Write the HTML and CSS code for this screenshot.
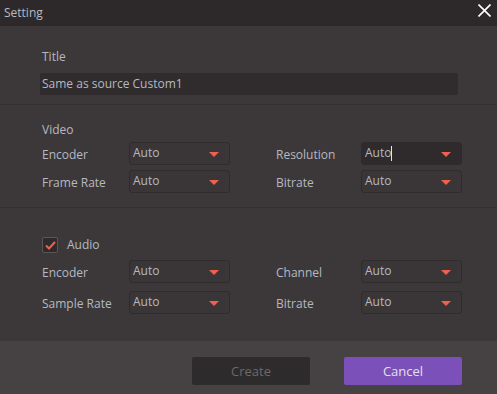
FILE: index.html
```html
<!DOCTYPE html>
<html>
  <head>
    <meta charset="utf-8"/>
    <link rel="stylesheet" href="styles.css">
  </head>
  <body>
    <div class="dialog">

      <div class="titlebar">
        <span class="titlebar-text">Setting</span>
        <svg class="close" width="13" height="13" viewBox="0 0 13 13">
          <path d="M0.5 0.5 L12.5 12.5 M12.5 0.5 L0.5 12.5" stroke="#ffffff" stroke-width="1.6" fill="none"/>
        </svg>
      </div>

      <div class="section section-title">
        <div class="heading">Title</div>
        <div class="text-input">Same as source Custom1</div>
      </div>

      <div class="section section-video">
        <div class="heading">Video</div>
        <div class="grid grid-video">
          <span class="label">Encoder</span>
          <div class="select"><span>Auto</span><i class="arrow"></i></div>
          <span></span>
          <span class="label">Resolution</span>
          <div class="select focused"><span>Auto</span><b class="caret"></b><i class="arrow"></i></div>

          <span class="label">Frame Rate</span>
          <div class="select"><span>Auto</span><i class="arrow"></i></div>
          <span></span>
          <span class="label">Bitrate</span>
          <div class="select"><span>Auto</span><i class="arrow"></i></div>
        </div>
      </div>

      <div class="section section-audio">
        <div class="check-row">
          <span class="checkbox">
            <svg width="11" height="9" viewBox="0 0 11 9">
              <path d="M1 4.5 L4 7.5 L10 1" stroke="#f0604f" stroke-width="2" fill="none"/>
            </svg>
          </span>
          <span class="check-label">Audio</span>
        </div>
        <div class="grid grid-audio">
          <span class="label">Encoder</span>
          <div class="select"><span>Auto</span><i class="arrow"></i></div>
          <span></span>
          <span class="label">Channel</span>
          <div class="select"><span>Auto</span><i class="arrow"></i></div>

          <span class="label">Sample Rate</span>
          <div class="select"><span>Auto</span><i class="arrow"></i></div>
          <span></span>
          <span class="label">Bitrate</span>
          <div class="select"><span>Auto</span><i class="arrow"></i></div>
        </div>
      </div>

      <div class="footer">
        <button class="btn btn-create">Create</button>
        <button class="btn btn-cancel">Cancel</button>
      </div>

    </div>
  </body>
</html>
```

FILE: styles.css
```css
html, body {
  margin: 0px;
  padding: 0px;
  background-color: #3c3839;
}

body {
  width: 497px;
  height: 394px;
  overflow: hidden;
  font-family: "Open Sans", "Noto Sans", sans-serif;
  font-size: 12px;
  color: #b6b8c1;
}

.dialog {
  display: flex;
  flex-direction: column;
  height: 394px;
}

.titlebar {
  height: 26px;
  background-color: #2d292a;
  display: flex;
  align-items: center;
  justify-content: space-between;
  padding: 0px 6px 0px 4px;
  flex-shrink: 0;
}

.titlebar-text {
  color: #b8bac3;
  margin-top: -2px;
}

.close {
  margin-top: -6px;
}

.section {
  padding-left: 40px;
  border-bottom: 1px solid #353132;
}

.heading {
  padding-left: 2px;
  line-height: 16px;
}

.section-title {
  padding-top: 23px;
  height: 55px;
}

.section-title .heading {
  margin-bottom: 8px;
}

.text-input {
  width: 416px;
  height: 22px;
  line-height: 22px;
  padding-left: 2px;
  background-color: #302c2d;
  border-radius: 2px;
}

.section-video {
  padding-top: 17px;
  height: 85px;
}

.section-video .heading {
  margin-bottom: 4px;
}

.grid {
  display: grid;
  grid-template-columns: 87px 101px 46px 85px 101px;
  align-items: center;
  padding-left: 2px;
}

.grid-video {
  row-gap: 5px;
}

.grid-audio {
  row-gap: 8px;
}

.label {
  line-height: 16px;
  padding-top: 2px;
}

.select {
  height: 21px;
  border: 1px solid #302c2d;
  border-radius: 3px;
  background-color: #3a3637;
  display: flex;
  align-items: center;
  padding-left: 3px;
  position: relative;
}

.select span {
  margin-top: -2px;
}

.select.focused {
  background-color: #2f2b2c;
  border-color: #2f2b2c;
}

.caret {
  width: 1px;
  height: 15px;
  background-color: #e6e6e6;
  margin-top: -1px;
}

.arrow {
  position: absolute;
  right: 10px;
  top: 9px;
  width: 0px;
  height: 0px;
  border-left: 5px solid transparent;
  border-right: 5px solid transparent;
  border-top: 5px solid #f0604f;
}

.section-audio {
  padding-top: 29px;
  flex: 1;
  border-bottom: none;
}

.check-row {
  display: flex;
  align-items: center;
  padding-left: 2px;
  margin-bottom: 7px;
}

.checkbox {
  width: 14px;
  height: 14px;
  border: 1px solid #5a5657;
  border-radius: 2px;
  background-color: #2f2b2c;
  display: flex;
  align-items: center;
  justify-content: center;
}

.check-label {
  margin-left: 9px;
  margin-top: -2px;
}

.footer {
  height: 53px;
  background-color: #464243;
  display: flex;
  align-items: flex-start;
  padding: 16px 35px 0px 192px;
  gap: 34px;
  box-sizing: border-box;
  flex-shrink: 0;
}

.btn {
  width: 118px;
  height: 28px;
  border: none;
  border-radius: 2px;
  font-family: "Open Sans", "Noto Sans", sans-serif;
  font-size: 13px;
  padding: 0px;
}

.btn-create {
  background-color: #2e2b2c;
  color: #6c696a;
}

.btn-cancel {
  background-color: #7c50b9;
  color: #e4e0ea;
}
```
